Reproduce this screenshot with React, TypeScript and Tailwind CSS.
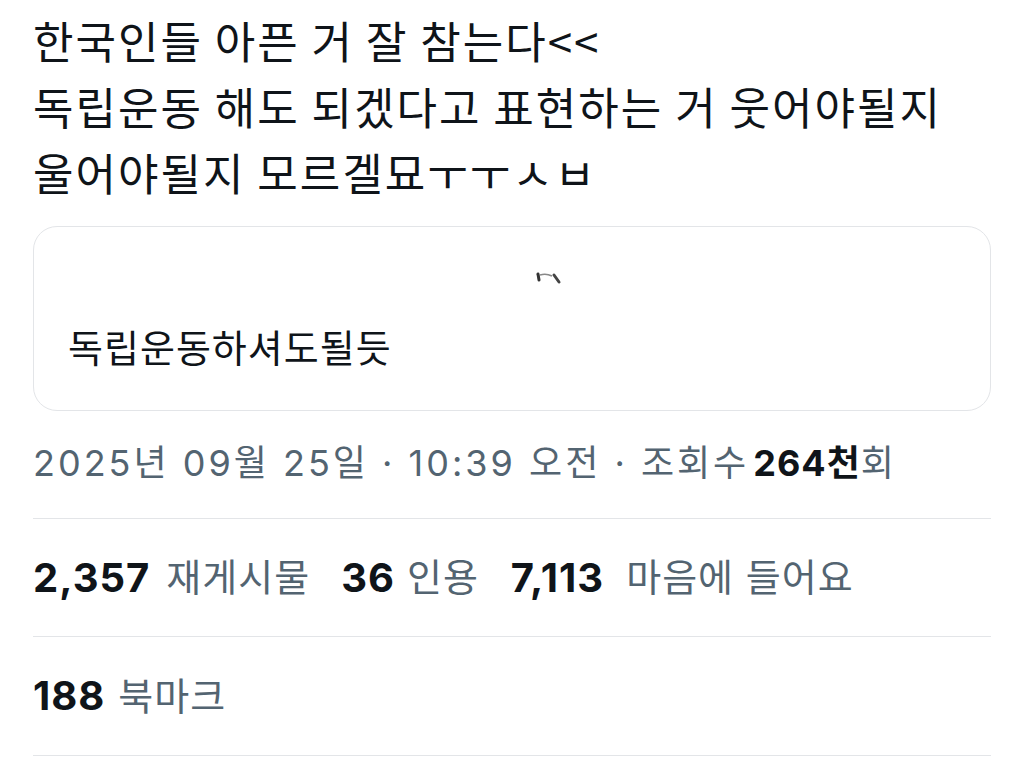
import React from "react";

const KR = { fontFamily: '"Noto Sans CJK KR", "Noto Sans", sans-serif' };
const MIX = { fontFamily: 'Inter, "Noto Sans CJK KR", sans-serif' };

export default function App() {
  return (
    <div className="w-[1024px] h-[766px] overflow-hidden bg-white px-[33px] pt-[7px]">
      <p className="text-[44px] leading-[66px] tracking-[2px] text-[#0f1419]" style={KR}>
        한국인들 아픈 거 잘 참는다&lt;&lt;
        <br />
        독립운동 해도 되겠다고 표현하는 거 웃어야될지
        <br />
        울어야될지 모르겔묘ㅜㅜㅅㅂ
      </p>

      <div className="relative mt-[21px] h-[185px] rounded-[24px] border border-[#e3e5e8] pl-[34px] pt-[100px]">
        <svg className="absolute left-[502px] top-[44px]" width="26" height="14" viewBox="0 0 26 14">
          <path d="M2 3 L3 9" stroke="#333" strokeWidth="3" strokeLinecap="round" />
          <path d="M4 4 Q10 2 16 5" stroke="#888" strokeWidth="1.5" fill="none" />
          <path d="M18 4 L23 11" stroke="#444" strokeWidth="3" strokeLinecap="round" />
        </svg>
        <p className="text-[38px] leading-none tracking-[1px] text-[#0f1419]" style={KR}>
          독립운동하셔도될듯
        </p>
      </div>

      <div className="flex h-[107px] items-center pb-[4px] text-[36px] tracking-[3px] text-[#536471]" style={MIX}>
        <span>2025년 09월 25일 · 10:39 오전 · 조회수 </span>
        <span className="ml-[4px] font-bold tracking-[1px] text-[#0f1419]">264천</span>
        <span>회</span>
      </div>

      <div className="flex h-[118px] items-center border-t border-[#e3e5e8] tracking-[1px]" style={MIX}>
        <span className="text-[40px] font-bold text-[#0f1419]">2,357</span>
        <span className="ml-[16px] text-[38px] text-[#536471]">재게시물</span>
        <span className="ml-[31px] text-[40px] font-bold text-[#0f1419]">36</span>
        <span className="ml-[12px] text-[38px] text-[#536471]">인용</span>
        <span className="ml-[32px] text-[40px] font-bold text-[#0f1419]">7,113</span>
        <span className="ml-[22px] text-[38px] text-[#536471]">마음에 들어요</span>
      </div>

      <div className="flex h-[119px] items-center border-t border-[#e3e5e8] tracking-[1px]" style={MIX}>
        <span className="text-[40px] font-bold text-[#0f1419]">188</span>
        <span className="ml-[13px] text-[38px] text-[#536471]">북마크</span>
      </div>

      <div className="border-t border-[#e3e5e8]" />
    </div>
  );
}
